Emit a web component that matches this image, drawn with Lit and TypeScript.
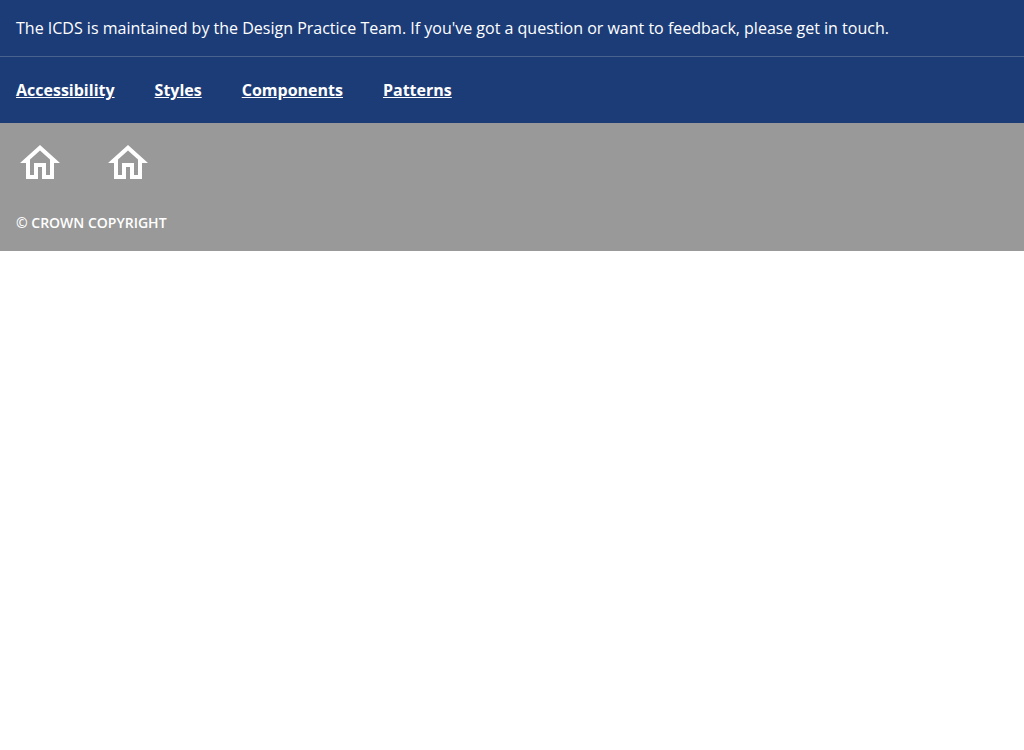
import { LitElement, html, css } from "lit";
import { customElement } from "lit/decorators.js";

const LINKS = ["Accessibility", "Styles", "Components", "Patterns"];
const LOGOS = ["Home", "Organisation home"];

@customElement("app-root")
export class AppRoot extends LitElement {
  static styles = css`
    :host {
      display: block;
      font-family: "Open Sans", sans-serif;
      font-size: 16px;
      line-height: 24px;
      color: #fff;
    }
    .main {
      background: #1c3c78;
    }
    .description {
      padding: 16px;
      border-bottom: 1px solid #49638f;
    }
    .text {
      margin: 0;
    }
    .links {
      display: flex;
      flex-wrap: wrap;
      gap: 16px 40px;
      padding: 21px 16px;
    }
    .link {
      color: inherit;
      font-weight: 700;
    }
    .base {
      display: flex;
      flex-direction: column;
      gap: 24px;
      padding: 16px;
      background: #999;
    }
    .logos {
      display: flex;
      gap: 40px;
    }
    .logo {
      display: block;
      color: inherit;
    }
    .icon {
      display: block;
      width: 48px;
      height: 48px;
      fill: currentColor;
    }
    .copyright {
      margin: 0;
      font-size: 14px;
      font-weight: 600;
      text-transform: uppercase;
    }
  `;

  render() {
    return html`
      <footer>
        <div class="main">
          <div class="description">
            <p class="text">
              The ICDS is maintained by the Design Practice Team. If you've got a question or want to
              feedback, please get in touch.
            </p>
          </div>
          <nav class="links" aria-label="Footer">
            ${LINKS.map((label) => html`<a class="link" href="#">${label}</a>`)}
          </nav>
        </div>
        <div class="base">
          <div class="logos">
            ${LOGOS.map(
              (label) => html`
                <a class="logo" href="#" aria-label=${label}>
                  <svg class="icon" viewBox="0 0 24 24" aria-hidden="true">
                    <path d="m12 5.69 5 4.5V18h-2v-6H9v6H7v-7.81l5-4.5M12 3 2 12h3v8h6v-6h2v6h6v-8h3L12 3Z" />
                  </svg>
                </a>
              `
            )}
          </div>
          <p class="copyright">© Crown Copyright</p>
        </div>
      </footer>
    `;
  }
}
